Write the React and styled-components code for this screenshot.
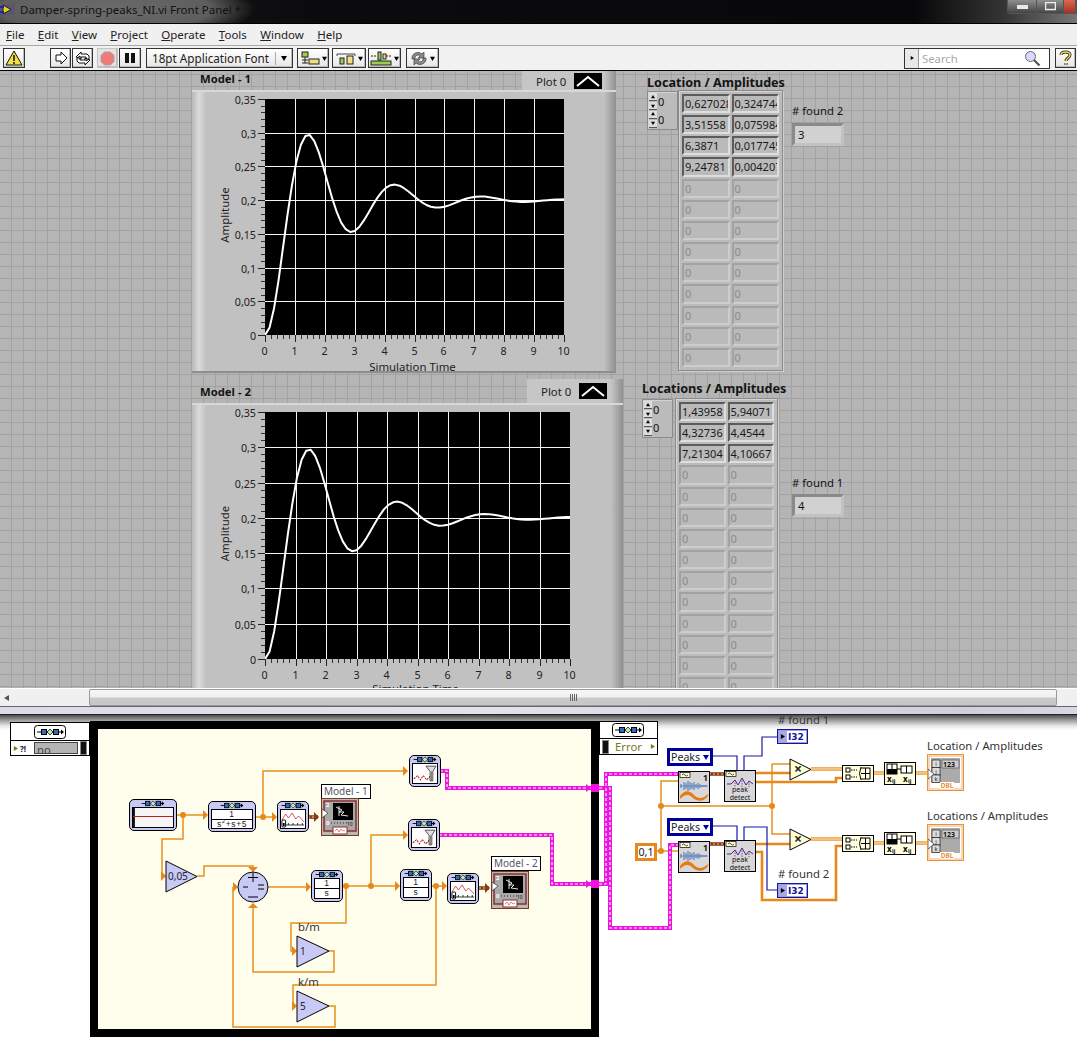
import styled, { createGlobalStyle, css } from "styled-components"

const GlobalStyle = createGlobalStyle`
  html, body {
    margin: 0;
    padding: 0;
    background: #fff;
  }
  body {
    font-family: "Noto Sans", "Open Sans", sans-serif;
    font-size: 11.3px;
    color: #111;
  }
  svg text {
    font-family: "Noto Sans", "Open Sans", sans-serif;
  }
`

const place = origin => css`
  position: absolute;
  left: ${p => p.$x}px;
  top: ${p => p.$y - origin}px;
`
const panelAt = place(71)
const nodeAt = place(714)

const sized = css`
  width: ${p => p.$w}px;
  height: ${p => p.$h}px;
`

/* ---------- window chrome ---------- */

const Page = styled.div`
  width: 1077px;
  height: 1037px;
  display: flex;
  flex-direction: column;
  overflow: hidden;
`
const TitleBar = styled.header`
  height: 23px;
  flex: none;
  display: flex;
  align-items: flex-start;
  justify-content: space-between;
  background:
    radial-gradient(ellipse 150px 34px at 105px 9px, #6b6b6b 0%, #5e5e5e 70%, rgba(60, 60, 60, 0) 100%),
    linear-gradient(90deg, #1a1a1a 0, #0b0b0d 30%, #08080a 85%, #333 93%, #777 100%);
  border-bottom: 1px solid #000;
`
const TitleLeft = styled.div`
  display: flex;
  align-items: center;
  gap: 5px;
  height: 19px;
  font-size: 11.5px;
  color: #111;
  white-space: nowrap;
`
const WindowButtons = styled.div`
  display: flex;
  height: 13px;
  border: 1px solid #555;
  border-top: none;
  border-radius: 0 0 0 4px;
`
const WindowButton = styled.div`
  ${sized};
  display: flex;
  align-items: center;
  justify-content: center;
  border-right: 1px solid #555;
  background: ${p => p.$bg || "linear-gradient(#8f8f8f, #444)"};
`
const MenuBar = styled.nav`
  height: 21px;
  flex: none;
  display: flex;
  align-items: center;
  gap: 13.4px;
  padding-left: 6px;
  background: #f0f0f0;
  border-bottom: 1px solid #a8a8a8;
  font-size: 11.5px;
  color: #222;
  u {
    text-decoration-thickness: 1px;
  }
`
const Toolbar = styled.div`
  height: 24px;
  flex: none;
  display: flex;
  align-items: center;
  padding: 0 1px 0 3px;
  background: #f1f1f1;
  border-bottom: 1px solid #000;
`
const ToolButton = styled.div`
  width: ${p => p.$w}px;
  height: 20px;
  margin-left: ${p => p.$gap || 0}px;
  flex: none;
  box-sizing: border-box;
  display: flex;
  align-items: center;
  justify-content: center;
  gap: 2px;
  background: ${p => (p.$off ? "#e4e4e4" : "linear-gradient(#fff, #e6e6e6)")};
  border: 1px solid ${p => (p.$off ? "#c4c4c4" : "#333")};
  box-shadow: inset -1px -1px 0 #bbb;
`
const FontSelect = styled(ToolButton)`
  justify-content: space-between;
  padding: 0 5px;
  font-size: 11.7px;
  white-space: nowrap;
  color: #222;
`
const SelectArrow = styled.span`
  height: 13px;
  padding-left: 5px;
  border-left: 1px solid #aaa;
  display: flex;
  align-items: center;
`
const SearchBox = styled.div`
  width: 146px;
  height: 21px;
  margin-left: auto;
  box-sizing: border-box;
  display: flex;
  align-items: center;
  background: #fff;
  border: 1px solid #333;
  color: #aaa;
  font-size: 11.3px;
`
const SearchTag = styled.div`
  width: 13px;
  height: 100%;
  margin-right: 3px;
  background: #e8e8e8;
  border-right: 1px solid #999;
  display: flex;
  align-items: center;
  justify-content: center;
`
const SearchIcon = styled.div`
  margin-left: auto;
  margin-right: 8px;
  display: flex;
`

/* ---------- front panel ---------- */

const FrontPanel = styled.main`
  position: relative;
  height: 617px;
  flex: none;
  overflow: hidden;
  background-color: #b5b5b5;
  background-image:
    linear-gradient(#a2a2a2 1px, transparent 1px),
    linear-gradient(90deg, #a2a2a2 1px, transparent 1px);
  background-size: 12px 12px;
  background-position: 11px 3px;
`
const ControlLabel = styled.div`
  ${panelAt};
  font-size: ${p => p.$size || 11.3}px;
  font-weight: ${p => (p.$bold ? 700 : 400)};
  line-height: 16px;
  white-space: nowrap;
  color: #141414;
`
const GraphPanel = styled.section`
  ${panelAt};
  ${sized};
  box-sizing: border-box;
  background: linear-gradient(90deg, #b9b9b9 0, #dadada 7px, #d0d0d0 10px, #c1c1c1 14px, #c1c1c1 calc(100% - 12px), #8f8f8f 100%);
  border-top: 2px solid #d8d8d8;
  border-bottom: 2px solid #8e8e8e;
`
const PlotLegend = styled.div`
  ${panelAt};
  ${sized};
  box-sizing: border-box;
  display: flex;
  align-items: center;
  gap: 8px;
  padding-left: 14px;
  background: linear-gradient(90deg, #c6c6c6, #c6c6c6 calc(100% - 12px), #909090);
  font-size: 11.4px;
  color: #222;
`
const PlotSwatch = styled.div`
  width: 28px;
  height: 16px;
  background: #000;
  display: flex;
`
const ArrayFrame = styled.div`
  ${panelAt};
  width: ${p => p.$w}px;
  box-sizing: border-box;
  display: grid;
  grid-template-columns: 1fr 1fr;
  gap: 2px 2px;
  padding: 3px;
  background: #bbb;
  border: 1px solid #8b8b8b;
  box-shadow: inset 1px 1px 0 #d4d4d4, 1px 1px 0 #cfcfcf;
`
const ArrayCell = styled.div`
  height: 19.17px;
  box-sizing: border-box;
  overflow: hidden;
  white-space: nowrap;
  padding-left: 1px;
  line-height: 16px;
  font-size: 11px;
  background: #bababa;
  color: ${p => (p.$dim ? "#8b8b8b" : "#1a1a1a")};
  border: 2px solid;
  border-color: ${p =>
    p.$dim
      ? "#a2a2a2 #cdcdcd #cdcdcd #a2a2a2"
      : "#5c5c5c #dedede #dedede #5c5c5c"};
`
const IndexFrame = styled.div`
  ${panelAt};
  width: 31px;
  box-sizing: border-box;
  display: flex;
  flex-direction: column;
  padding: 1px;
  background: #bbb;
  border: 1px solid #8b8b8b;
  box-shadow: inset 1px 1px 0 #d4d4d4;
`
const IndexRow = styled.div`
  height: 17.500px;
  display: flex;
  align-items: center;
  gap: 1px;
  font-size: 11px;
`
const Spinner = styled.div`
  width: 8px;
  display: flex;
  flex-direction: column;
  gap: 1px;
  span {
    height: 7px;
    background: #ddd;
    border-bottom: 1px solid #555;
    display: flex;
    align-items: center;
    justify-content: center;
  }
`
const NumericBox = styled.div`
  ${panelAt};
  width: 52px;
  height: 23px;
  box-sizing: border-box;
  padding-left: 3px;
  line-height: 17px;
  font-size: 11.3px;
  background: #d1d1d1;
  border-style: solid;
  border-width: 3px;
  border-color: #8a8a8a #c2c2c2 #c2c2c2 #8a8a8a;
`

/* ---------- scrollbar + splitter ---------- */

const Scrollbar = styled.div`
  height: 17px;
  flex: none;
  display: flex;
  align-items: stretch;
  background: #f0f0f0;
  border-top: 1px solid #fff;
`
const ScrollArrow = styled.div`
  width: 89px;
  display: flex;
  align-items: center;
  padding-left: 4px;
  box-sizing: border-box;
`
const ScrollThumb = styled.div`
  width: 968px;
  flex: none;
  box-sizing: border-box;
  display: flex;
  align-items: center;
  justify-content: center;
  gap: 1px;
  background: linear-gradient(#f7f7f7, #f0f0f0 45%, #cbcbcb 55%, #c6c6c6);
  border: 1px solid #9a9a9a;
  border-radius: 2px;
  span {
    width: 1px;
    height: 7px;
    background: #666;
  }
`
const Splitter = styled.div`
  height: 9px;
  flex: none;
  box-sizing: border-box;
  background: linear-gradient(90deg, #dcdce8, #e2e2ec 45%, #cfcfdf 90%, #d9d9e5);
  border-top: 1px solid #666;
  border-bottom: 1px solid #222;
`

/* ---------- block diagram ---------- */

const Diagram = styled.section`
  position: relative;
  flex: 1;
  overflow: hidden;
  background: linear-gradient(#4c4c4c 0, #9a9a9a 5px, #e8e8e8 11px, #fff 15px);
`
const SequenceFrame = styled.div`
  ${nodeAt};
  ${sized};
  box-sizing: border-box;
  background: #fffdec;
  border: 8px solid #000;
`
const WireLayer = styled.svg`
  position: absolute;
  left: 0;
  top: 0;
`
const TunnelBox = styled.div`
  ${nodeAt};
  ${sized};
  box-sizing: border-box;
  display: flex;
  flex-direction: column;
  background: #fff;
  border: 1px solid #000;
`
const TunnelHead = styled.div`
  height: 17px;
  display: flex;
  align-items: center;
  justify-content: center;
  border-bottom: 1px solid #000;
`
const TunnelRow = styled.div`
  flex: 1;
  display: flex;
  align-items: center;
  padding: 0 2px;
  gap: 2px;
  font-size: 11.3px;
  color: ${p => p.$color || "#111"};
`
const WarnMark = styled.strong`
  width: 12px;
  font-size: 8px;
`
const ErrorLabel = styled.span`
  flex: 1;
  padding-left: 4px;
`
const ErrorValue = styled.div`
  flex: 1;
  height: 12px;
  box-sizing: border-box;
  background: #b4b4b4;
  border: 1px solid #444;
  padding-left: 2px;
  line-height: 14px;
  overflow: hidden;
  color: #444;
`
const ErrorStop = styled.div`
  width: 5px;
  height: 12px;
  background: #111;
  border: 1px solid #888;
`
const ExpressBox = styled.div`
  ${nodeAt};
  ${sized};
  box-sizing: border-box;
  display: flex;
  flex-direction: column;
  align-items: center;
  padding: 0 2px 2px;
  background: #c9c9f5;
  border: 1px solid #000;
  border-radius: 5px;
`
const ExpressScreen = styled.div`
  flex: 1;
  width: 100%;
  box-sizing: border-box;
  min-height: 0;
  background: #fff;
  border: 1px solid #000;
  display: flex;
  flex-direction: column;
  align-items: center;
  justify-content: center;
  overflow: hidden;
`
const fractionText = css`
  height: 9px;
  line-height: 9px;
  text-align: center;
  font-family: "Liberation Sans", sans-serif;
  font-size: 8.5px;
  letter-spacing: 0.6px;
  white-space: nowrap;
  color: #222;
`
const FractionTop = styled.div`
  ${fractionText};
  width: 100%;
  border-bottom: 1px solid #000;
`
const FractionBottom = styled.div`
  ${fractionText};
  sup {
    font-size: 6px;
    line-height: 0;
  }
`
const NodeCaption = styled.div`
  ${nodeAt};
  font-size: ${p => p.$size || 11.3}px;
  line-height: 14px;
  white-space: nowrap;
  color: #333;
`
const BoxedCaption = styled(NodeCaption)`
  height: 13px;
  line-height: 13px;
  padding: 0 2px;
  background: #fff;
  border: 1px solid #000;
  font-size: 10px;
  color: #556;
`
const RingConstant = styled.div`
  ${nodeAt};
  ${sized};
  box-sizing: border-box;
  display: flex;
  align-items: center;
  justify-content: ${p => (p.$center ? "center" : "space-between")};
  padding: 0 ${p => (p.$center ? 0 : 1)}px;
  background: #fff;
  border: 3px solid ${p => p.$color};
  font-size: 10.6px;
  color: #222;
`
const DropArrow = styled.span`
  width: 0;
  height: 0;
  border: 3.5px solid transparent;
  border-top: 5px solid #00009c;
  border-bottom: none;
`
const I32Box = styled.div`
  ${nodeAt};
  width: 31px;
  height: 15px;
  box-sizing: border-box;
  display: flex;
  align-items: center;
  gap: 1px;
  background: #fff;
  border: 1px solid #1414a0;
  outline: 1px solid #a0a0d8;
  outline-offset: -2px;
  color: #1414a0;
  font-family: "DejaVu Sans", sans-serif;
  font-size: 9px;
  font-weight: 700;
`
const I32Tag = styled.span`
  width: 9px;
  height: 100%;
  background: #a8a8e8;
  display: flex;
  align-items: center;
  justify-content: center;
`
const SignalNode = styled.div`
  ${nodeAt};
  ${sized};
  box-sizing: border-box;
  background: ${p => p.$bg};
  border: 1px solid ${p => p.$edge || "#000"};
`
const Glyph = styled.svg`
  display: block;
  flex: none;
`

/* ---------- small drawings ---------- */

const Triangle = ({ dir = "right", size = 3, color = "#000" }) => (
  <Glyph width={size * 2} height={size * 2} viewBox="0 0 6 6">
    <path
      d={
        dir === "right"
          ? "M1 0L6 3L1 6Z"
          : dir === "left"
            ? "M5 0L0 3L5 6Z"
            : dir === "up"
              ? "M0 5L3 0L6 5Z"
              : "M0 1L6 1L3 6Z"
      }
      fill={color}
    />
  </Glyph>
)

const Chain = ({ width = 26 }) => (
  <Glyph width={width} height="7" viewBox="0 0 26 8">
    <path d="M0 4H24" stroke="#000" />
    <path d="M23 1.5L26 4L23 6.5Z" fill="#000" />
    <rect x="4.5" y="1.5" width="5" height="5" fill="#2f6fb8" stroke="#000" />
    <path d="M13 1L16 4L13 7L10 4Z" fill="#bfe8b0" stroke="#000" strokeWidth=".7" />
    <rect x="16.5" y="1.5" width="5" height="5" fill="#2f6fb8" stroke="#000" />
  </Glyph>
)

const BigChain = () => (
  <Glyph width="33" height="14" viewBox="0 0 33 14">
    <rect x=".5" y=".5" width="31" height="13" rx="3" fill="#fff" stroke="#000" />
    <path d="M3 7H27" stroke="#000" />
    <path d="M27 4.500L30 7L27 9.500Z" fill="#000" />
    <rect x="7.500" y="4.500" width="5" height="5" fill="#2f6fb8" stroke="#000" />
    <path d="M16 4L19 7L16 10L13 7Z" fill="#bfe8b0" stroke="#000" strokeWidth=".7" />
    <rect x="19.500" y="4.500" width="5" height="5" fill="#2f6fb8" stroke="#000" />
  </Glyph>
)

const MiniChart = () => (
  <svg width="100%" height="100%" viewBox="0 0 26 18" preserveAspectRatio="none">
    <path d="M1 10L5 4L8 8L12 3L16 9L19 6L25 12" fill="none" stroke="#c22" strokeWidth=".8" />
    <path d="M3 15H25M8 13V15M13 13V15M18 13V15M23 13V15" stroke="#000" strokeWidth=".8" fill="none" />
    <rect x="1" y="10" width="4" height="7" rx="1" fill="#fff" stroke="#000" />
    <rect x="2" y="13" width="2" height="3" fill="#000" />
  </svg>
)

const FilterChart = () => (
  <svg width="100%" height="100%" viewBox="0 0 26 18" preserveAspectRatio="none">
    <path d="M1 14L5 11L8 15L11 11L15 15L18 12L20 15" fill="none" stroke="#a11" strokeWidth="1" strokeDasharray="2 1" />
    <path d="M14 2H25L21.500 7V16H18.500V7Z" fill="#ddd" stroke="#333" strokeWidth=".8" />
    <path d="M20 7V16" stroke="#777" />
  </svg>
)

const Signal = () => (
  <svg width="100%" height="100%" viewBox="0 0 42 20" preserveAspectRatio="none">
    <rect width="42" height="20" fill="#f5f5f5" />
    <rect width="2" height="20" fill="#111" />
    <path d="M0 9H42" stroke="#c21818" strokeWidth="1.2" />
  </svg>
)

const Express = ({ x, y, w, h, children }) => (
  <ExpressBox $x={x} $y={y} $w={w} $h={h}>
    <Chain width={24} />
    <ExpressScreen>{children}</ExpressScreen>
  </ExpressBox>
)

const Integrator = ({ x, y }) => (
  <Express x={x} y={y} w={32} h={32}>
    <FractionTop>1</FractionTop>
    <FractionBottom>s</FractionBottom>
  </Express>
)

const GraphTerminal = ({ x, y }) => (
  <SignalNode $x={x} $y={y} $w={38} $h={38} $bg="#b9b9b9" $edge="#7a3a1c">
    <Glyph width="36" height="36" viewBox="0 0 36 36">
      <rect x="2" y="2" width="32" height="30" fill="#a9a9a9" stroke="#8a3030" strokeWidth="1.5" />
      <rect x="11" y="4" width="20" height="17" fill="#000" />
      <path d="M14 8L20 11L17 13L22 13L19 16L26 17M17 7V17" stroke="#fff" fill="none" strokeWidth=".9" />
      <path d="M0 10L6 14L0 19Z" fill="#fff" stroke="#333" strokeWidth=".7" />
      <text x="4" y="8" fontSize="6" fontWeight="700" fill="#fff">2</text>
      <text x="4" y="26" fontSize="6" fontWeight="700" fill="#fff">0</text>
      <text x="25" y="27" fontSize="5" fill="#111">10</text>
      <path d="M9 24H25" stroke="#333" strokeDasharray="1 2" />
      <rect x="11" y="28" width="14" height="7" fill="#fff" stroke="#8a3030" />
      <path d="M13 32L15 30L17 33L19 30L21 32L23 31" stroke="#c22" strokeWidth=".6" fill="none" />
    </Glyph>
  </SignalNode>
)

const NodeStrip = () => (
  <>
    <rect x="1" y="0.5" width="10" height="5" fill="#ffffd8" stroke="#000" strokeWidth=".7" />
    <path d="M3 3Q4.500 1 6 3T9 3" stroke="#000" strokeWidth=".7" fill="none" />
  </>
)

const Harmonic = ({ x, y }) => (
  <SignalNode $x={x} $y={y} $w={32} $h={32} $bg="#d8d8d8">
    <Glyph width="30" height="30" viewBox="0 0 30 30">
      <NodeStrip />
      <text x="24" y="8.500" fontSize="8.500" fontWeight="700" fill="#111">1</text>
      <path d="M2 12V16M5 10V18M7 11V17M9 9V19M11 10V18M13 11V17M15 10V18M17 12V16M19 11V17M21 12V16M23 13V15M25 13V15M27 13V15" stroke="#2a58b8" strokeWidth=".8" />
      <path d="M1 14H29" stroke="#2a58b8" strokeWidth=".5" />
      <path d="M1 24C6 18 10 18 15 23C19 27 24 27 29 22V24C24 30 19 30 14 26C10 22 6 22 1 27Z" fill="#e87a10" />
    </Glyph>
  </SignalNode>
)

const PeakDetect = ({ x, y }) => (
  <SignalNode $x={x} $y={y} $w={32} $h={32} $bg="#d8d8d8">
    <Glyph width="30" height="30" viewBox="0 0 30 30">
      <NodeStrip />
      <path d="M2 13L6 13L10 9L13 14L17 7L21 14L24 10L28 13" stroke="#1d1db0" fill="none" strokeWidth=".9" />
      <path d="M10 9V16M17 7V16M24 10V16" stroke="#d01818" strokeWidth=".8" strokeDasharray="1.500 1" />
      <text x="15" y="20.500" fontSize="7" textAnchor="middle" fill="#111">peak</text>
      <text x="15" y="29" fontSize="7" textAnchor="middle" fill="#111">detect</text>
    </Glyph>
  </SignalNode>
)

const BuildArray = ({ x, y }) => (
  <SignalNode $x={x} $y={y} $w={32} $h={17} $bg="#ffffe0">
    <Glyph width="30" height="15" viewBox="0 0 30 15">
      <rect x="3" y="2" width="4" height="4" fill="#fff" stroke="#000" />
      <rect x="3" y="9" width="4" height="4" fill="#fff" stroke="#000" />
      <path d="M8 4H14M8 11H14" stroke="#000" strokeDasharray="1.500 1" />
      <path d="M18 1Q15 7.500 18 14" stroke="#000" fill="none" />
      <path d="M18 2H27V13H18M22.500 2V13M18 7.500H27" stroke="#000" fill="none" />
    </Glyph>
  </SignalNode>
)

const Reshape = ({ x, y }) => (
  <SignalNode $x={x} $y={y} $w={32} $h={23} $bg="#ffffe0">
    <Glyph width="30" height="21" viewBox="0 0 30 21">
      <rect x="2" y="1" width="10" height="10" fill="#fff" stroke="#000" />
      <rect x="2" y="6" width="10" height="5" fill="#000" />
      <path d="M7 1V6" stroke="#000" />
      <path d="M12 6H16" stroke="#000" />
      <rect x="16" y="3" width="11" height="7" fill="#fff" stroke="#000" />
      <path d="M21.500 3V10" stroke="#000" />
      <text x="2" y="18.500" fontSize="8" fontWeight="700" fill="#000">x</text>
      <text x="7" y="19.500" fontSize="5.500" fontWeight="700" fill="#000">ij</text>
      <text x="18" y="18.500" fontSize="8" fontWeight="700" fill="#000">x</text>
      <text x="23" y="19.500" fontSize="5.500" fontWeight="700" fill="#000">ij</text>
    </Glyph>
  </SignalNode>
)

const ArrayIndicator = ({ x, y }) => (
  <SignalNode $x={x} $y={y} $w={37} $h={37} $bg="#fff" $edge="#e8923a">
    <Glyph width="35" height="35" viewBox="0 0 35 35">
      <rect x="1" y="1" width="33" height="33" fill="none" stroke="#f0b070" strokeWidth="1" />
      <rect x="3" y="3" width="29" height="25" fill="#ababab" />
      <rect x="14" y="5" width="17" height="8" fill="#ccc" stroke="#555" strokeWidth=".7" />
      <text x="15" y="11.500" fontSize="7" fontWeight="700" fill="#111">123</text>
      <rect x="4" y="5" width="8" height="7.500" fill="#ddd" stroke="#000" strokeWidth=".6" />
      <rect x="4" y="12.500" width="8" height="7.500" fill="#ddd" stroke="#000" strokeWidth=".6" />
      <rect x="4" y="20" width="8" height="7.500" fill="#ddd" stroke="#000" strokeWidth=".6" />
      <text x="8" y="11" fontSize="6" textAnchor="middle" fill="#111">i</text>
      <text x="8" y="18.500" fontSize="6" textAnchor="middle" fill="#111">j</text>
      <text x="8" y="26" fontSize="6" textAnchor="middle" fill="#111">k</text>
      <rect x="12" y="27" width="14" height="7" fill="#fff" />
      <text x="19" y="33" fontSize="6.500" fontWeight="700" textAnchor="middle" fill="#e8923a">DBL</text>
      <path d="M0 14L6 19L0 24Z" fill="#fff" stroke="#333" strokeWidth=".7" />
    </Glyph>
  </SignalNode>
)

/* ---------- waveform graph ---------- */

const yLabels = ["0", "0,05", "0,1", "0,15", "0,2", "0,25", "0,3", "0,35"]

const stepResponse = t => {
  const w = Math.sqrt(4.75)
  return 0.2 * (1 - Math.exp(-t / 2) * (Math.cos(w * t) + Math.sin(w * t) / (2 * w)))
}

function WaveformChart({ plotW, plotH, height, xTitleY }) {
  const px = 73
  const py = 7
  const sx = t => px + (t / 10) * plotW
  const sy = v => py + plotH - (v / 0.35) * plotH
  const pts = []
  for (let i = 0; i <= 68; i++) {
    const t = i * 0.15
    pts.push(`${sx(t).toFixed(1)},${sy(stepResponse(t)).toFixed(1)}`)
  }

  const ticks = []
  for (let i = 0; i <= 7; i++) {
    const y = Math.round(sy(i * 0.05)) + 0.5
    ticks.push(<path key={`ym${i}`} d={`M${px - 7} ${y}H${px}`} stroke="#222" />)
    if (i < 7)
      for (let k = 1; k < 5; k++) {
        const ym = Math.round(sy((i + k / 5) * 0.05)) + 0.5
        ticks.push(<path key={`y${i}-${k}`} d={`M${px - 4} ${ym}H${px}`} stroke="#333" />)
      }
    ticks.push(
      <text key={`yl${i}`} x={px - 9} y={y + 4} fontSize="10.7" textAnchor="end" fill="#222">
        {yLabels[i]}
      </text>
    )
  }
  for (let i = 0; i <= 10; i++) {
    const x = Math.round(sx(i)) + 0.5
    ticks.push(<path key={`xm${i}`} d={`M${x} ${py + plotH}v7`} stroke="#222" />)
    if (i < 10)
      for (let k = 1; k < 5; k++) {
        const xm = Math.round(sx(i + k / 5)) + 0.5
        ticks.push(<path key={`x${i}-${k}`} d={`M${xm} ${py + plotH}v4`} stroke="#333" />)
      }
    ticks.push(
      <text key={`xl${i}`} x={x - 1} y={py + plotH + 20} fontSize="10.7" textAnchor="middle" fill="#222">
        {i}
      </text>
    )
  }

  const grid = []
  for (let i = 1; i < 10; i++) grid.push(`M${Math.round(sx(i)) + 0.5} ${py}v${plotH}`)
  for (let i = 1; i < 7; i++) grid.push(`M${px} ${Math.round(sy(i * 0.05)) + 0.5}h${plotW}`)

  const midY = py + plotH / 2
  return (
    <svg width="100%" height={height} style={{ display: "block" }}>
      <rect x={px} y={py} width={plotW} height={plotH} fill="#000" />
      <path d={grid.join("")} stroke="#f4f4f4" fill="none" />
      <clipPath id={`plot-${plotW}`}>
        <rect x={px} y={py} width={plotW} height={plotH} />
      </clipPath>
      <polyline
        clipPath={`url(#plot-${plotW})`}
        points={pts.join(" ")}
        fill="none"
        stroke="#fff"
        strokeWidth="2"
        strokeLinejoin="round"
      />
      {ticks}
      <text x="0" y="0" fontSize="11.4" textAnchor="middle" fill="#222" transform={`translate(37 ${midY - 2}) rotate(-90)`}>
        Amplitude
      </text>
      <text x={px + plotW / 2 - 2} y={xTitleY} fontSize="11.4" textAnchor="middle" fill="#222">
        Simulation Time
      </text>
    </svg>
  )
}

const Swatch = () => (
  <PlotSwatch>
    <svg width="28" height="16" viewBox="0 0 28 16">
      <path d="M3 13L14 4L25 13" fill="none" stroke="#fff" strokeWidth="2" />
    </svg>
  </PlotSwatch>
)

const IndexBlock = ({ x, y }) => (
  <IndexFrame $x={x} $y={y}>
    {[0, 1].map(i => (
      <IndexRow key={i}>
        <Spinner>
          <span><Triangle dir="up" size={2} /></span>
          <span><Triangle dir="down" size={2} /></span>
        </Spinner>
        0
      </IndexRow>
    ))}
  </IndexFrame>
)

const table1 = [
  ["0,627028", "0,324744"],
  ["3,51558", "0,075984"],
  ["6,3871", "0,017745"],
  ["9,24781", "0,004207"],
]
const table2 = [
  ["1,43958", "5,94071"],
  ["4,32736", "4,4544"],
  ["7,21304", "4,10667"],
]

const ValueTable = ({ x, y, w, rows, total }) => {
  const cells = []
  for (let r = 0; r < total; r++) {
    const row = rows[r]
    for (let c = 0; c < 2; c++) {
      cells.push(
        <ArrayCell key={`${r}-${c}`} $dim={!row}>
          {row ? row[c] : "0"}
        </ArrayCell>
      )
    }
  }
  return (
    <ArrayFrame $x={x} $y={y} $w={w}>
      {cells}
    </ArrayFrame>
  )
}

/* ---------- wires (page coordinates) ---------- */

const thinWires = [
  "M177 814H205",
  "M183 814V838H162V875H163",
  "M197 875H204V865H253V868",
  "M256 816H274",
  "M263 816V770H404",
  "M233 886H235",
  "M233 886V1026H335V1005H329",
  "M329 950H334V971H253V904",
  "M268 886H308",
  "M342 885H397",
  "M346 885V922H291V950H294",
  "M371 885V834H405",
  "M432 885H444",
  "M436 885V984H293V1005H294",
  "M656 850H678",
  "M661 850V780H678",
  "M661 805H772",
  "M772 763V833H790",
  "M772 763H790",
]
const thickWires = [
  "M756 772H790",
  "M756 781H836V777H842",
  "M756 843H790",
  "M756 851H762V899H836V845H842",
]
const doubleWires = [
  "M811 768H842",
  "M811 838H842",
  "M874 772H884",
  "M874 842H884",
  "M916 772H927",
  "M916 842H927",
]
const pinkWires = [
  "M440 770H447V787H591",
  "M439 834H552V883H591",
  "M599 787H610V927H670V844H678",
  "M599 883H606V773H678",
]
const blueWires = [
  "M713 755H737V769",
  "M744 769V755H762V736H777",
  "M713 825H737V839",
  "M744 839V826H767V889H777",
]
const brownWires = ["M308 816H318", "M479 887H489", "M709 773H724", "M709 843H724"]
const wireDots = [
  [183, 814],
  [263, 816],
  [346, 885],
  [371, 885],
  [436, 885],
  [661, 850],
  [661, 805],
  [772, 805],
]
const rightArrows = [
  [208, 814],
  [277, 816],
  [408, 770],
  [408, 834],
  [238, 886],
  [311, 886],
  [400, 885],
  [447, 885],
  [166, 875],
  [297, 950],
  [297, 1005],
]
const pinkArrows = [
  [591, 787],
  [591, 883],
]

const Amp = ({ points, label, lx, ly, fill = "#c9c9f5", size = 10, weight = 400 }) => (
  <g>
    <polygon points={points} fill={fill} stroke="#000" />
    <text x={lx} y={ly} fontSize={size} fontWeight={weight} fill="#223">
      {label}
    </text>
  </g>
)

function DiagramDrawing() {
  return (
    <WireLayer width="1077" height="323" viewBox="0 714 1077 323">
      <g fill="none" stroke="#e8901e" strokeWidth="1.5">
        {thinWires.map(d => <path key={d} d={d} />)}
      </g>
      <g fill="none" stroke="#e8881a" strokeWidth="2.6">
        {thickWires.map(d => <path key={d} d={d} />)}
      </g>
      {doubleWires.map(d => (
        <g key={d} fill="none">
          <path d={d} stroke="#e8901e" strokeWidth="3.4" />
          <path d={d} stroke="#fff3dc" strokeWidth="1" />
        </g>
      ))}
      {pinkWires.map(d => (
        <g key={d} fill="none">
          <path d={d} stroke="#f010e0" strokeWidth="4" />
          <path d={d} stroke="#fff" strokeWidth="1.2" strokeDasharray="3 2" />
        </g>
      ))}
      {brownWires.map(d => (
        <g key={d} fill="none">
          <path d={d} stroke="#8a3a12" strokeWidth="3.6" />
          <path d={d} stroke="#e8c8a8" strokeWidth="1" strokeDasharray="2 2" />
        </g>
      ))}
      <g fill="none" stroke="#1818a8" strokeWidth="1.2">
        {blueWires.map(d => <path key={d} d={d} />)}
      </g>
      <g fill="#e8881a">
        {wireDots.map(([x, y]) => <circle key={`${x}-${y}`} cx={x} cy={y} r="3" />)}
        {rightArrows.map(([x, y]) => <path key={`${x}-${y}`} d={`M${x} ${y}L${x - 5} ${y - 5}V${y + 5}Z`} />)}
        <path d="M253 871L248 866H258Z" />
        <path d="M253 902L248 907H258Z" />
      </g>
      <path d="M319 816L314 811V821Z" fill="#8a3a12" />
      <path d="M490 887L485 882V892Z" fill="#8a3a12" />
      {pinkArrows.map(([x, y]) => (
        <g key={y}>
          <path d={`M${x} ${y}L${x - 5} ${y - 4}V${y + 4}Z`} fill="#f010e0" />
          <rect x={x} y={y - 4} width="8" height="8" fill="#f010e0" />
        </g>
      ))}
      <Amp points="166,860 197,875.500 166,891" label="0,05" lx={168} ly={879} />
      <Amp points="297,935 329,950 297,966" label="1" lx={300} ly={954} />
      <Amp points="297,990 329,1005 297,1021" label="5" lx={300} ly={1009} />
      <Amp points="790,758 811,768.500 790,779" fill="#ffffd0" label="×" lx={794} ly={773} size={14} weight={700} />
      <Amp points="790,828 811,838.500 790,849" fill="#ffffd0" label="×" lx={794} ly={843} size={14} weight={700} />
      <circle cx="253" cy="886" r="15" fill="#c9c9f5" stroke="#000" />
      <path d="M248 876.500H258M253 871.500V881M243 886H248M258 884H264M258 888H264M248 896H258" stroke="#000" fill="none" />
    </WireLayer>
  )
}

const Menu = ["File", "Edit", "View", "Project", "Operate", "Tools", "Window", "Help"]

export default function App() {
  return (
    <Page>
      <GlobalStyle />
      <TitleBar>
        <TitleLeft>
          <svg width="15" height="17" viewBox="0 0 15 17">
            <path d="M0 3H15V14H0Z" fill="#58586a" />
            <path d="M3 4V13L11 8.500Z" fill="#e8d020" stroke="#222" />
            <path d="M0 6H4M0 11H4" stroke="#22a" strokeWidth="2" />
          </svg>
          Damper-spring-peaks_NI.vi Front Panel *
        </TitleLeft>
        <WindowButtons>
          <WindowButton $w={28} $h={13}>
            <svg width="11" height="4"><rect width="11" height="4" fill="#e8e8e8" /></svg>
          </WindowButton>
          <WindowButton $w={26} $h={13}>
            <svg width="11" height="9"><rect x=".5" y=".5" width="10" height="7" fill="none" stroke="#eee" strokeWidth="1.500" /></svg>
          </WindowButton>
          <WindowButton $w={11} $h={13} $bg="linear-gradient(#d86a50, #a83020)" />
        </WindowButtons>
      </TitleBar>

      <MenuBar>
        {Menu.map(item => (
          <span key={item}>
            <u>{item[0]}</u>
            {item.slice(1)}
          </span>
        ))}
      </MenuBar>

      <Toolbar>
        <ToolButton $w={22}>
          <svg width="18" height="16" viewBox="0 0 18 16">
            <path d="M9 1L17 15H1Z" fill="#f4e040" stroke="#111" />
            <path d="M9 5V11M9 12V14" stroke="#111" strokeWidth="1.500" />
          </svg>
        </ToolButton>
        <ToolButton $w={21} $gap={25}>
          <svg width="14" height="14" viewBox="0 0 14 14">
            <path d="M2 4H7V1L13 7L7 13V10H2Z" fill="#fff" stroke="#111" />
          </svg>
        </ToolButton>
        <ToolButton $w={21} $gap={1}>
          <svg width="16" height="15" viewBox="0 0 16 15">
            <path d="M1 6L6 1V3H12L14 5V8L11 10V6H6V8ZM15 9L10 14V12H4L2 10V7L5 5V9H10V7Z" fill="#fff" stroke="#111" />
          </svg>
        </ToolButton>
        <ToolButton $w={21} $gap={4} $off>
          <svg width="15" height="15" viewBox="0 0 15 15">
            <path d="M4.500 1H10.500L14 4.500V10.500L10.500 14H4.500L1 10.500V4.500Z" fill="#ee7a7a" stroke="#b0a0a0" />
          </svg>
        </ToolButton>
        <ToolButton $w={22} $gap={1}>
          <svg width="12" height="12" viewBox="0 0 12 12">
            <path d="M1 1H5V11H1ZM7 1H11V11H7Z" fill="#111" />
          </svg>
        </ToolButton>
        <FontSelect $w={147} $gap={5}>
          18pt Application Font
          <SelectArrow><Triangle dir="down" size={3} /></SelectArrow>
        </FontSelect>
        <ToolButton $w={32} $gap={4}>
          <svg width="20" height="15" viewBox="0 0 20 15">
            <rect x="2" y="1" width="6" height="5" fill="#9ad04a" stroke="#222" />
            <path d="M5 6V12M2 9H8M2 12H8" stroke="#222" />
            <rect x="9" y="8" width="10" height="5" fill="#f0e080" stroke="#222" />
          </svg>
          <Triangle dir="down" size={2.500} />
        </ToolButton>
        <ToolButton $w={34} $gap={3}>
          <svg width="20" height="15" viewBox="0 0 20 15">
            <path d="M1 5V3H19V5" stroke="#444" fill="none" />
            <rect x="4" y="7" width="4" height="6" fill="#9ad04a" stroke="#222" />
            <rect x="11" y="5" width="6" height="8" fill="#f0e080" stroke="#222" />
          </svg>
          <Triangle dir="down" size={2.500} />
        </ToolButton>
        <ToolButton $w={33} $gap={2}>
          <svg width="22" height="15" viewBox="0 0 22 15">
            <rect x="1" y="10" width="20" height="4" fill="#9ad04a" stroke="#222" />
            <rect x="8" y="1" width="3" height="8" fill="#9ad04a" stroke="#222" />
            <rect x="13" y="3" width="3" height="5" fill="#f0e080" stroke="#222" />
            <path d="M1 5H7M16 5H21" stroke="#222" strokeDasharray="2 1" />
          </svg>
          <Triangle dir="down" size={2.500} />
        </ToolButton>
        <ToolButton $w={33} $gap={5}>
          <svg width="18" height="15" viewBox="0 0 18 15">
            <path d="M2 8A6 6 0 0 1 12 3L14 1V7H8L10 5A3 3 0 0 0 5 8ZM16 7A6 6 0 0 1 6 12L4 14V8H10L8 10A3 3 0 0 0 13 7Z" fill="#8a8a8a" stroke="#444" strokeWidth=".7" />
          </svg>
          <Triangle dir="down" size={2.500} />
        </ToolButton>
        <SearchBox>
          <SearchTag><Triangle dir="right" size={2} /></SearchTag>
          Search
          <SearchIcon>
            <svg width="17" height="17" viewBox="0 0 17 17">
              <circle cx="6.500" cy="6.500" r="5" fill="#d8d8ff" stroke="#667" />
              <path d="M10 10L15.500 15.500" stroke="#554" strokeWidth="2.200" />
            </svg>
          </SearchIcon>
        </SearchBox>
        <ToolButton $w={21} $gap={5}>
          <svg width="15" height="18" viewBox="0 0 15 18">
            <path d="M3 6C3 2 12 2 12 6C12 9 8 9 8 12M8 14V16" fill="none" stroke="#222" strokeWidth="3" />
            <path d="M3 6C3 2 12 2 12 6C12 9 8 9 8 12M8 14V16" fill="none" stroke="#f0d840" strokeWidth="1.500" />
          </svg>
        </ToolButton>
      </Toolbar>

      <FrontPanel>
        <ControlLabel $x={200} $y={71} $bold>Model - 1</ControlLabel>
        <PlotLegend $x={522} $y={71} $w={94} $h={20}>
          Plot 0
          <Swatch />
        </PlotLegend>
        <GraphPanel $x={192} $y={90} $w={424} $h={283}>
          <WaveformChart plotW={299} plotH={236} height={279} xTitleY={279} />
        </GraphPanel>

        <ControlLabel $x={200} $y={384} $bold>Model - 2</ControlLabel>
        <PlotLegend $x={527} $y={379} $w={96} $h={24}>
          Plot 0
          <Swatch />
        </PlotLegend>
        <GraphPanel $x={192} $y={403} $w={431} $h={300}>
          <WaveformChart plotW={305} plotH={247} height={296} xTitleY={288} />
        </GraphPanel>

        <ControlLabel $x={647} $y={75} $bold $size={12.6}>Location / Amplitudes</ControlLabel>
        <IndexBlock x={647} y={91} />
        <ValueTable x={678} y={90} w={105} rows={table1} total={13} />
        <ControlLabel $x={792} $y={103}># found 2</ControlLabel>
        <NumericBox $x={792} $y={123}>3</NumericBox>

        <ControlLabel $x={642} $y={381} $bold $size={12.6}>Locations / Amplitudes</ControlLabel>
        <IndexBlock x={642} y={399} />
        <ValueTable x={675} y={398} w={103} rows={table2} total={14} />
        <ControlLabel $x={792} $y={475}># found 1</ControlLabel>
        <NumericBox $x={792} $y={494}>4</NumericBox>
      </FrontPanel>

      <Scrollbar>
        <ScrollArrow><Triangle dir="left" size={3} color="#555" /></ScrollArrow>
        <ScrollThumb><span /><span /><span /><span /></ScrollThumb>
      </Scrollbar>
      <Splitter />

      <Diagram>
        <TunnelBox $x={10} $y={721} $w={80} $h={34}>
          <TunnelHead><BigChain /></TunnelHead>
          <TunnelRow>
            <Triangle dir="right" size={2.500} color="#7a7a20" />
            <WarnMark>?!</WarnMark>
            <ErrorValue>no</ErrorValue>
            <ErrorStop />
          </TunnelRow>
        </TunnelBox>

        <SequenceFrame $x={90} $y={720} $w={509} $h={316} />

        <TunnelBox $x={599} $y={720} $w={59} $h={34}>
          <TunnelHead><BigChain /></TunnelHead>
          <TunnelRow $color="#77772a">
            <ErrorStop />
            <ErrorLabel>Error</ErrorLabel>
            <Triangle dir="right" size={2.500} color="#7a7a20" />
          </TunnelRow>
        </TunnelBox>

        <DiagramDrawing />

        <ExpressBox $x={129} $y={798} $w={48} $h={32}>
          <Chain width={26} />
          <ExpressScreen><Signal /></ExpressScreen>
        </ExpressBox>
        <Express x={208} y={800} w={48} h={31}>
          <FractionTop>1</FractionTop>
          <FractionBottom>s<sup>2</sup>+s+5</FractionBottom>
        </Express>
        <Express x={277} y={800} w={32} h={31}><MiniChart /></Express>
        <BoxedCaption $x={321} $y={783}>Model - 1</BoxedCaption>
        <GraphTerminal x={321} y={797} />

        <Express x={409} y={754} w={32} h={32}><FilterChart /></Express>
        <Express x={408} y={818} w={32} h={32}><FilterChart /></Express>
        <Integrator x={311} y={869} />
        <Integrator x={400} y={868} />
        <Express x={447} y={872} w={32} h={31}><MiniChart /></Express>
        <BoxedCaption $x={491} $y={855}>Model - 2</BoxedCaption>
        <GraphTerminal x={491} y={870} />

        <NodeCaption $x={298} $y={919}>b/m</NodeCaption>
        <NodeCaption $x={298} $y={974}>k/m</NodeCaption>

        <RingConstant $x={635} $y={842} $w={22} $h={18} $color="#e8881a" $center>0,1</RingConstant>
        <RingConstant $x={667} $y={747} $w={46} $h={18} $color="#00009c">Peaks<DropArrow /></RingConstant>
        <RingConstant $x={667} $y={817} $w={46} $h={18} $color="#00009c">Peaks<DropArrow /></RingConstant>

        <Harmonic x={678} y={770} />
        <Harmonic x={678} y={840} />
        <PeakDetect x={724} y={769} />
        <PeakDetect x={724} y={839} />

        <NodeCaption $x={778} $y={712}># found 1</NodeCaption>
        <I32Box $x={777} $y={728}><I32Tag><Triangle dir="right" size={2.500} /></I32Tag>I32</I32Box>
        <NodeCaption $x={778} $y={866}># found 2</NodeCaption>
        <I32Box $x={777} $y={882}><I32Tag><Triangle dir="right" size={2.500} /></I32Tag>I32</I32Box>

        <BuildArray x={842} y={764} />
        <BuildArray x={842} y={834} />
        <Reshape x={884} y={761} />
        <Reshape x={884} y={831} />

        <NodeCaption $x={927} $y={738}>Location / Amplitudes</NodeCaption>
        <ArrayIndicator x={927} y={753} />
        <NodeCaption $x={927} $y={808}>Locations / Amplitudes</NodeCaption>
        <ArrayIndicator x={927} y={823} />
      </Diagram>
    </Page>
  )
}
